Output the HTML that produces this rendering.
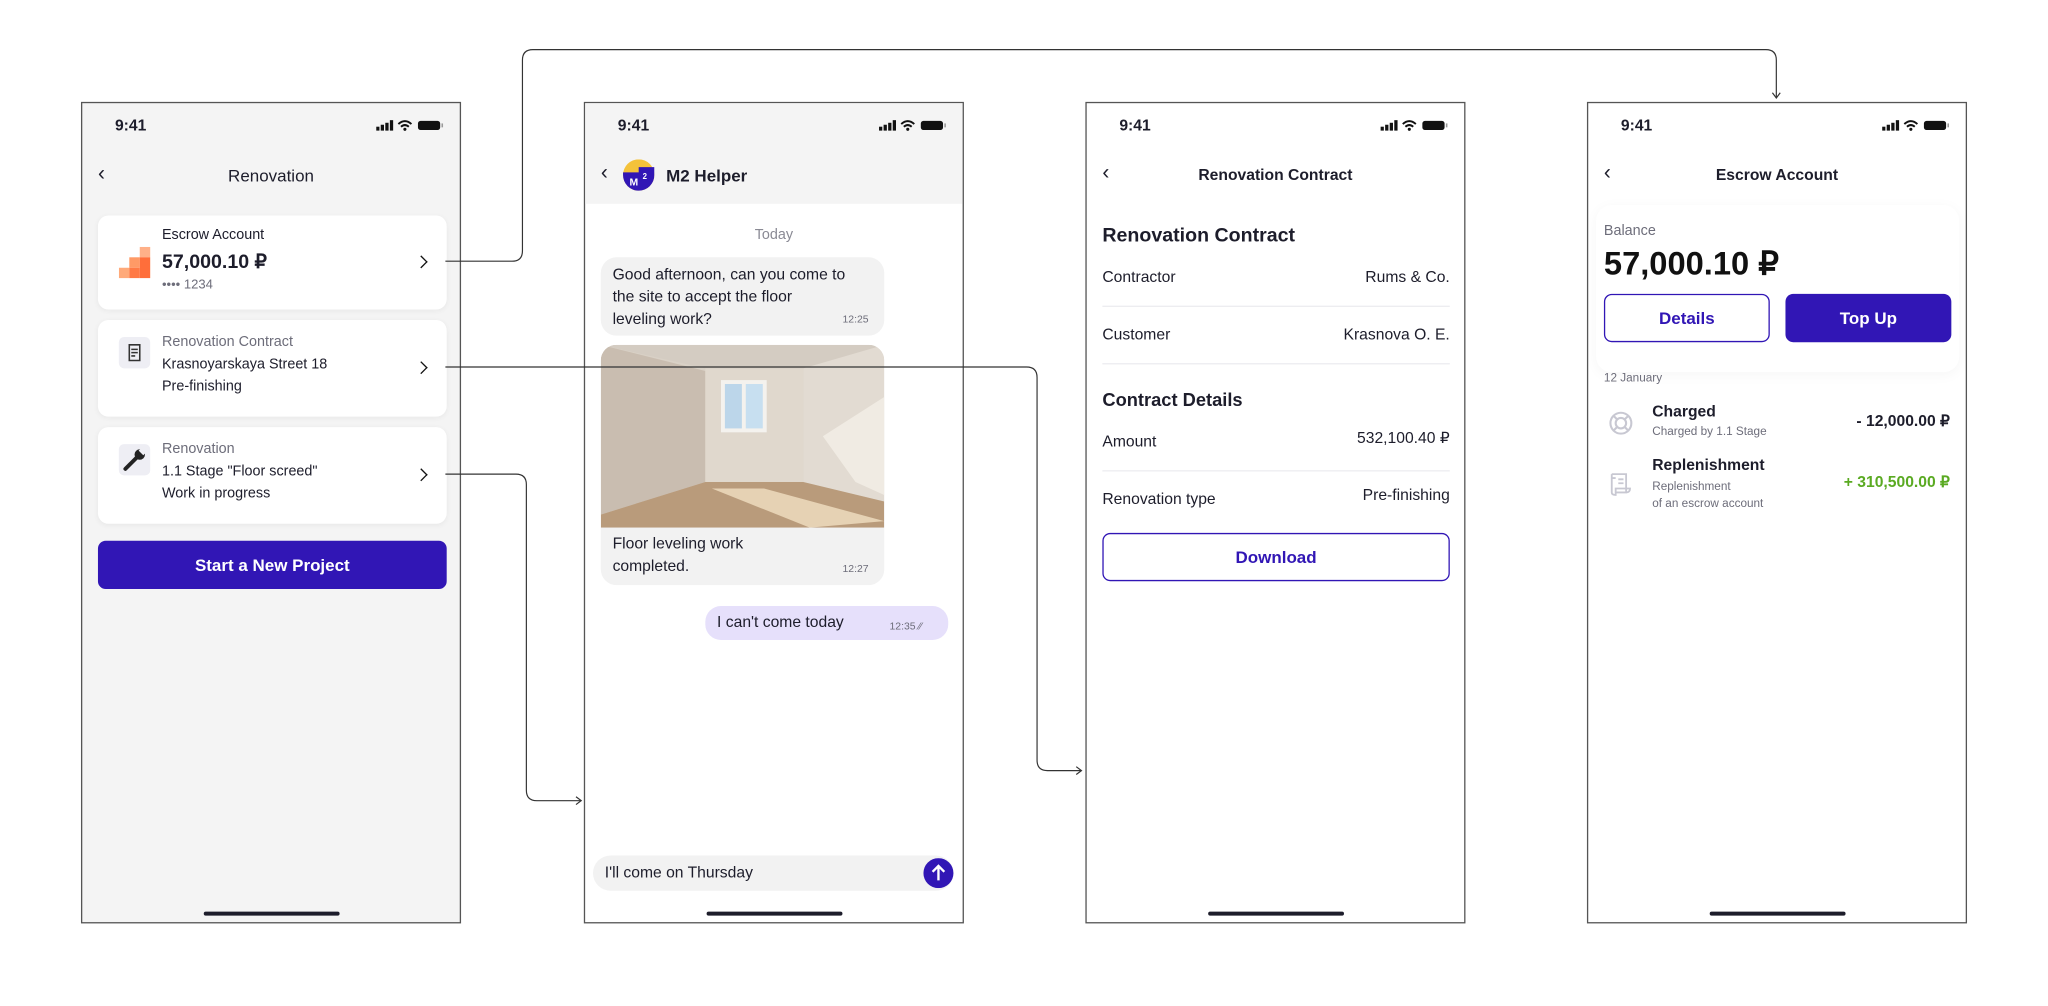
<!DOCTYPE html>
<html><head><meta charset="utf-8">
<style>
*{margin:0;padding:0;box-sizing:border-box}
body{width:2048px;height:1006px;background:#fff;overflow:hidden;font-family:"Liberation Sans",sans-serif;color:#1d1d2b}
#w{position:absolute;left:0;top:0;width:1568px;height:770px;transform:scale(1.30612);transform-origin:0 0}
.ph{position:absolute;top:78px;width:291px;height:629px;border:1px solid #555;background:#fff;overflow:hidden}
.a{position:absolute;white-space:nowrap}
.time{left:25px;top:10px;font-size:12px;font-weight:bold}
.st{right:12px;top:12px}
.home{position:absolute;left:93px;top:619px;width:104px;height:3px;border-radius:2px;background:#1d1d2b}
.back{left:12px;top:46px;font-size:16px}
.ttl{left:0;width:100%;text-align:center;top:48px;font-size:13px}
.card{position:absolute;left:12px;width:267px;background:#fff;border-radius:8px;box-shadow:0 1px 4px rgba(0,0,0,.05)}
.g{color:#6d6d7a}
.chev{position:absolute;right:16px;width:7px;height:7px;border-right:1.6px solid #111;border-top:1.6px solid #111;transform:rotate(45deg)}
.btn{position:absolute;border-radius:6px;text-align:center;font-size:13px;font-weight:bold}
.ic{position:absolute;left:16px;width:24px;height:24px;background:#eeeef4;border-radius:4px}
.row{position:absolute;left:12px;width:266px;font-size:12px}
.row span{position:absolute;right:0}
.hr{position:absolute;left:12px;width:266px;height:1px;background:#ececf0}
</style></head><body><div id="w">

<!-- Phone 1 -->
<div class="ph" style="left:62px;background:#f4f4f4">
<div class="a time">9:41</div>
<svg class="a st" width="52" height="10" viewBox="0 0 52 10"><rect x="0" y="6" width="2.5" height="3" fill="#111"/><rect x="3.5" y="4.5" width="2.5" height="4.5" fill="#111"/><rect x="7" y="3" width="2.5" height="6" fill="#111"/><rect x="10.5" y="1" width="2.5" height="8" fill="#111"/><path d="M17 4Q22 -0.5 27 4M19 6Q22 3.5 25 6" stroke="#111" stroke-width="1.5" fill="none"/><circle cx="22" cy="8" r="1.2" fill="#111"/><rect x="32" y="1.5" width="17" height="7" rx="2" fill="#111"/><rect x="50" y="3.5" width="1.2" height="3" fill="#999"/></svg>
<div class="a back">&#8249;</div>
<div class="a ttl">Renovation</div>
<div class="card" style="top:86px;height:72px">
<svg class="a" style="left:16px;top:24px" width="25" height="24"><rect x="0" y="16" width="8" height="8" fill="#ffaa7a"/><rect x="8" y="8" width="8" height="8" fill="#ff9a66"/><rect x="8" y="16" width="8" height="8" fill="#ff7a45"/><rect x="16" y="0" width="8" height="8" fill="#ffb088"/><rect x="16" y="8" width="8" height="16" fill="#ff6e3a"/></svg>
<div class="a" style="left:49px;top:9px;font-size:11px">Escrow Account</div>
<div class="a" style="left:49px;top:26px;font-size:15px;font-weight:bold">57,000.10 ₽</div>
<div class="a g" style="left:49px;top:48px;font-size:10px">•••• 1234</div>
<div class="chev" style="top:32px"></div>
</div>
<div class="card" style="top:166px;height:74px">
<div class="ic" style="top:13px"><svg width="24" height="24"><path d="M8 6h8v12H8z M9.5 9.5h5M9.5 12h5M9.5 14.5h3" stroke="#333" stroke-width="1.2" fill="none"/></svg></div>
<div class="a g" style="left:49px;top:11px;font-size:11px">Renovation Contract</div>
<div class="a" style="left:49px;top:28px;font-size:11px">Krasnoyarskaya Street 18</div>
<div class="a" style="left:49px;top:45px;font-size:11px">Pre-finishing</div>
<div class="chev" style="top:33px"></div>
</div>
<div class="card" style="top:248px;height:74px">
<div class="ic" style="top:13px"><svg width="24" height="24"><path d="M5 19L14 10" stroke="#222" stroke-width="3" stroke-linecap="round"/><circle cx="16" cy="8" r="4" fill="#222"/><rect x="16" y="3" width="5" height="4" fill="#eeeef4" transform="rotate(45 18 5)"/></svg></div>
<div class="a g" style="left:49px;top:11px;font-size:11px">Renovation</div>
<div class="a" style="left:49px;top:28px;font-size:11px">1.1 Stage "Floor screed"</div>
<div class="a" style="left:49px;top:45px;font-size:11px">Work in progress</div>
<div class="chev" style="top:33px"></div>
</div>
<div class="btn" style="left:12px;top:335px;width:267px;height:37px;background:#3116b5;color:#fff;line-height:37px">Start a New Project</div>
<div class="home"></div>
</div>

<!-- Phone 2 -->
<div class="ph" style="left:447px">
<div class="a" style="left:0;top:0;width:100%;height:77px;background:#f4f4f4"></div>
<div class="a time">9:41</div>
<svg class="a st" width="52" height="10" viewBox="0 0 52 10"><rect x="0" y="6" width="2.5" height="3" fill="#111"/><rect x="3.5" y="4.5" width="2.5" height="4.5" fill="#111"/><rect x="7" y="3" width="2.5" height="6" fill="#111"/><rect x="10.5" y="1" width="2.5" height="8" fill="#111"/><path d="M17 4Q22 -0.5 27 4M19 6Q22 3.5 25 6" stroke="#111" stroke-width="1.5" fill="none"/><circle cx="22" cy="8" r="1.2" fill="#111"/><rect x="32" y="1.5" width="17" height="7" rx="2" fill="#111"/><rect x="50" y="3.5" width="1.2" height="3" fill="#999"/></svg>
<div class="a back" style="top:45px">&#8249;</div>
<svg class="a" style="left:29px;top:43px" width="24" height="24"><circle cx="12" cy="12" r="12" fill="#f4c23a"/><path d="M0 12V10H12V6H24V12A12 12 0 0 1 0 12Z" fill="#3116b5"/><text x="5" y="20" font-size="8" font-weight="bold" fill="#fff" font-family="Liberation Sans">M</text><text x="15" y="15" font-size="6" font-weight="bold" fill="#fff" font-family="Liberation Sans">2</text></svg>
<div class="a" style="left:62px;top:48px;font-size:13px;font-weight:bold">M2 Helper</div>
<div class="a g" style="left:0;width:100%;text-align:center;top:95px;font-size:11px;color:#8a8a94">Today</div>
<div class="a" style="left:12px;top:118px;width:217px;height:60px;background:#f2f2f2;border-radius:12px"></div>
<div class="a" style="left:21px;top:123px;font-size:12px;line-height:17px">Good afternoon, can you come to<br>the site to accept the floor<br>leveling work?</div>
<div class="a g" style="left:197px;top:161px;font-size:8px">12:25</div>
<div class="a" style="left:12px;top:185px;width:217px;height:184px;background:#f2f2f2;border-radius:12px;overflow:hidden">
<svg width="217" height="140" viewBox="0 0 217 140"><rect width="217" height="140" fill="#d9d1c6"/><polygon points="0,0 80,20 80,105 0,130" fill="#c9bdb0"/><polygon points="155,0 217,0 217,120 155,105" fill="#e2dbd2"/><polygon points="0,0 217,0 155,18 80,18" fill="#d4ccc2"/><rect x="80" y="18" width="75" height="87" fill="#e0d8cd"/><rect x="92" y="27" width="35" height="40" fill="#f4f2ee"/><rect x="95" y="30" width="13" height="34" fill="#bcd6ea"/><rect x="111" y="30" width="13" height="34" fill="#c7dff0"/><polygon points="0,130 80,105 155,105 217,120 217,140 0,140" fill="#b99b7b"/><polygon points="85,110 125,110 217,135 160,140" fill="#e6d2b4"/><polygon points="170,70 217,40 217,115 195,105" fill="#f0ebe3"/></svg>
</div>
<div class="a" style="left:21px;top:329px;font-size:12px;line-height:17px">Floor leveling work<br>completed.</div>
<div class="a g" style="left:197px;top:352px;font-size:8px">12:27</div>
<div class="a" style="left:92px;top:385px;width:186px;height:26px;background:#e6e0fb;border-radius:12px"></div>
<div class="a" style="left:101px;top:390px;font-size:12px">I can't come today</div>
<div class="a g" style="left:233px;top:396px;font-size:8px">12:35 ⁄⁄</div>
<div class="a" style="left:6px;top:576px;width:276px;height:27px;background:#f2f2f2;border-radius:14px"></div>
<div class="a" style="left:15px;top:582px;font-size:12px">I'll come on Thursday</div>
<svg class="a" style="left:259px;top:578px" width="23" height="23"><circle cx="11.5" cy="11.5" r="11.5" fill="#3116b5"/><path d="M11.5 17V6M7 10.5L11.5 6L16 10.5" stroke="#fff" stroke-width="1.8" fill="none"/></svg>
<div class="home"></div>
</div>

<!-- Phone 3 -->
<div class="ph" style="left:831px">
<div class="a time">9:41</div>
<svg class="a st" width="52" height="10" viewBox="0 0 52 10"><rect x="0" y="6" width="2.5" height="3" fill="#111"/><rect x="3.5" y="4.5" width="2.5" height="4.5" fill="#111"/><rect x="7" y="3" width="2.5" height="6" fill="#111"/><rect x="10.5" y="1" width="2.5" height="8" fill="#111"/><path d="M17 4Q22 -0.5 27 4M19 6Q22 3.5 25 6" stroke="#111" stroke-width="1.5" fill="none"/><circle cx="22" cy="8" r="1.2" fill="#111"/><rect x="32" y="1.5" width="17" height="7" rx="2" fill="#111"/><rect x="50" y="3.5" width="1.2" height="3" fill="#999"/></svg>
<div class="a back" style="top:45px">&#8249;</div>
<div class="a ttl" style="top:48px;font-weight:bold;font-size:12px">Renovation Contract</div>
<div class="a" style="left:12px;top:93px;font-size:15px;font-weight:bold">Renovation Contract</div>
<div class="row" style="top:126px">Contractor<span>Rums &amp; Co.</span></div>
<div class="hr" style="top:155px"></div>
<div class="row" style="top:170px">Customer<span>Krasnova O. E.</span></div>
<div class="hr" style="top:199px"></div>
<div class="a" style="left:12px;top:219px;font-size:14px;font-weight:bold">Contract Details</div>
<div class="row" style="top:252px">Amount<span style="top:-3px">532,100.40 ₽</span></div>
<div class="hr" style="top:281px"></div>
<div class="row" style="top:296px">Renovation type<span style="top:-3px">Pre-finishing</span></div>
<div class="btn" style="left:12px;top:329px;width:266px;height:37px;border:1px solid #3116b5;color:#3116b5;line-height:35px">Download</div>
<div class="home"></div>
</div>

<!-- Phone 4 -->
<div class="ph" style="left:1215px">
<div class="a time">9:41</div>
<svg class="a st" width="52" height="10" viewBox="0 0 52 10"><rect x="0" y="6" width="2.5" height="3" fill="#111"/><rect x="3.5" y="4.5" width="2.5" height="4.5" fill="#111"/><rect x="7" y="3" width="2.5" height="6" fill="#111"/><rect x="10.5" y="1" width="2.5" height="8" fill="#111"/><path d="M17 4Q22 -0.5 27 4M19 6Q22 3.5 25 6" stroke="#111" stroke-width="1.5" fill="none"/><circle cx="22" cy="8" r="1.2" fill="#111"/><rect x="32" y="1.5" width="17" height="7" rx="2" fill="#111"/><rect x="50" y="3.5" width="1.2" height="3" fill="#999"/></svg>
<div class="a back" style="top:45px">&#8249;</div>
<div class="a ttl" style="top:48px;font-weight:bold;font-size:12px">Escrow Account</div>
<div class="a" style="left:6px;top:78px;width:278px;height:128px;border-radius:12px;box-shadow:0 2px 10px rgba(0,0,0,.04)"></div>
<div class="a g" style="left:12px;top:92px;font-size:11px">Balance</div>
<div class="a" style="left:12px;top:108px;font-size:25px;font-weight:bold;color:#111">57,000.10 ₽</div>
<div class="btn" style="left:12px;top:146px;width:127px;height:37px;border:1px solid #3116b5;color:#3116b5;line-height:35px">Details</div>
<div class="btn" style="left:151px;top:146px;width:127px;height:37px;background:#3116b5;color:#fff;line-height:37px">Top Up</div>
<div class="a g" style="left:12px;top:205px;font-size:9px">12 January</div>
<svg class="a" style="left:15px;top:235px" width="20" height="20" fill="none" stroke="#c8c8d2" stroke-width="1.6"><circle cx="10" cy="10" r="8"/><circle cx="10" cy="10" r="4"/><path d="M4.5 4.5L7 7M15.5 4.5L13 7M4.5 15.5L7 13M15.5 15.5L13 13"/></svg>
<div class="a" style="left:49px;top:229px;font-size:12px;font-weight:bold">Charged</div>
<div class="a g" style="left:49px;top:246px;font-size:9px">Charged by 1.1 Stage</div>
<div class="a" style="right:12px;top:236px;font-size:12px;font-weight:bold">- 12,000.00 ₽</div>
<svg class="a" style="left:15px;top:282px" width="20" height="20" fill="none" stroke="#c8c8d2" stroke-width="1.4"><path d="M3 2H14V16H6M3 2V5H6M14 16Q17 16 17 13H6V18Q3 18 3 16V5M8 6H12M8 9H12"/></svg>
<div class="a" style="left:49px;top:270px;font-size:12px;font-weight:bold">Replenishment</div>
<div class="a g" style="left:49px;top:287px;font-size:9px;line-height:13px">Replenishment<br>of an escrow account</div>
<div class="a" style="right:12px;top:283px;font-size:12px;font-weight:bold;color:#5aaa22">+ 310,500.00 ₽</div>
<div class="home"></div>
</div>

<svg width="1568" height="770" style="position:absolute;left:0;top:0;z-index:5;pointer-events:none" fill="none" stroke="#333" stroke-width="0.9">
<path d="M341 200H392Q400 200 400 192V46Q400 38 408 38H1352Q1360 38 1360 46V75"/>
<path d="M1357 71L1360 75L1363 71"/>
<path d="M341 281H786Q794 281 794 289V582Q794 590 802 590H828"/>
<path d="M824 587L828 590L824 593"/>
<path d="M341 363H395Q403 363 403 371V605Q403 613 411 613H445"/>
<path d="M441 610L445 613L441 616"/>
</svg>
</div></body></html>
